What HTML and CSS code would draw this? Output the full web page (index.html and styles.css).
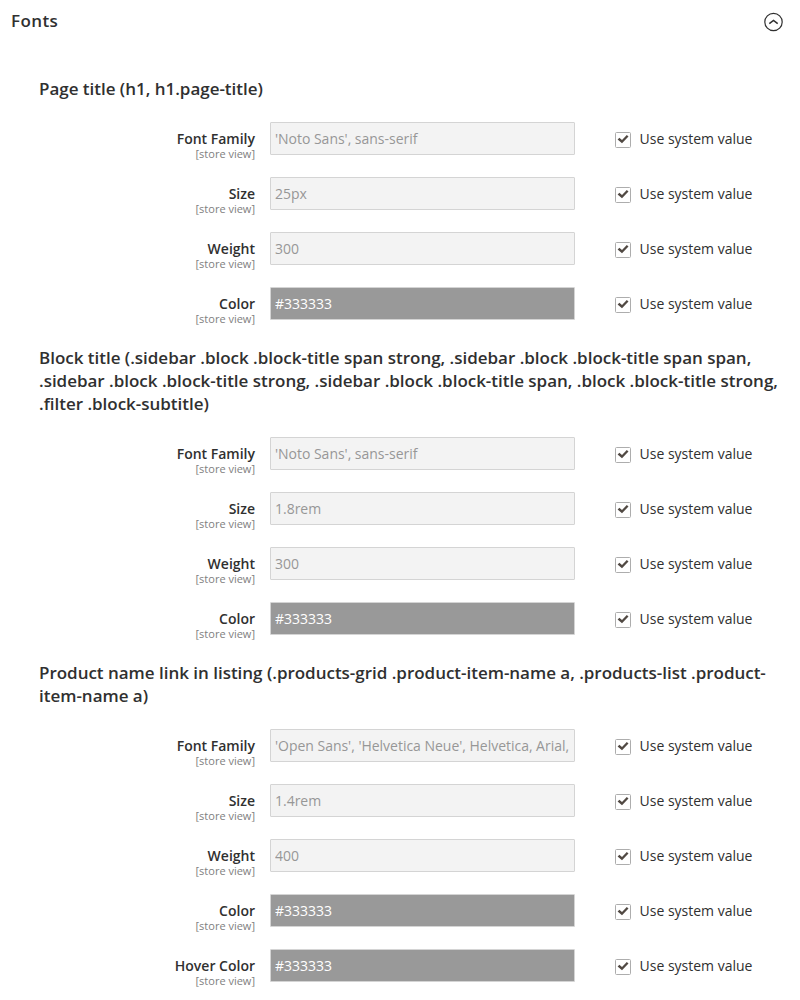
FILE: index.html
```html
<!DOCTYPE html>
<html lang="en">
<head>
<meta charset="utf-8">
<title>Fonts</title>
<link rel="stylesheet" href="styles.css">
</head>
<body>
<header class="section-head">
  <h1 class="section-title">Fonts</h1>
  <svg class="toggle" viewBox="0 0 20 20" width="20" height="20"><circle cx="10.5" cy="10" r="8.7"/><path d="M6.3 11.7 10.5 8.4 14.7 11.7" stroke-width="1.5"/></svg>
</header>
<main id="groups" class="groups"></main>
<script src="app.js"></script>
</body>
</html>
```
FILE: styles.css
```css
* { box-sizing: border-box; }
body { margin: 0; background: #fff; color: #303030; font: 14px/19px "Open Sans", sans-serif; height: 1000px; overflow: hidden; }
.section-head { display: flex; justify-content: space-between; align-items: flex-start; padding: 9px 17px 0 11px; height: 77px; }
.section-title { margin: 0; font-size: 17px; line-height: 24px; font-weight: 600; letter-spacing: .4px; }
.toggle { margin-top: 3px; fill: none; stroke: #303030; stroke-width: 1.2; }
.groups { padding: 0 20px 0 39px; }
.group { padding-bottom: 4px; }
.group-title { margin: 0 0 22px; font-size: 17px; line-height: 23px; font-weight: 600; letter-spacing: -.02px; }
.row { display: grid; grid-template-columns: 216px 305px 1fr; column-gap: 15px; height: 55px; }
.label { text-align: right; padding-top: 7px; font-weight: 600; }
.scope { display: block; font-size: 11px; line-height: 12px; font-weight: 400; color: #808080; }
.field { width: 305px; height: 33px; border: 1px solid #d4d4d4; border-radius: 1px; background: #f3f3f3; color: #979797; padding: 0 4px; font: 14px "Open Sans", sans-serif; letter-spacing: -.02px; opacity: 1; }
.field.color { background: #999; color: #fff; }
.system { display: flex; align-items: flex-start; gap: 8.5px; padding: 7px 0 0 25px; }
.check { width: 16px; height: 16px; margin-top: 3px; }
```
FILE: app.js
```js
const groups = [
  ["Page title (h1, h1.page-title)", [["Font Family", "'Noto Sans', sans-serif"], ["Size", "25px"], ["Weight", "300"], ["Color", "#333333"]]],
  ["Block title (.sidebar .block .block-title span strong, .sidebar .block .block-title span span, .sidebar .block .block-title strong, .sidebar .block .block-title span, .block .block-title strong, .filter .block-subtitle)", [["Font Family", "'Noto Sans', sans-serif"], ["Size", "1.8rem"], ["Weight", "300"], ["Color", "#333333"]]],
  ["Product name link in listing (.products-grid .product-item-name a, .products-list .product-item-name a)", [["Font Family", "'Open Sans', 'Helvetica Neue', Helvetica, Arial, sans-serif"], ["Size", "1.4rem"], ["Weight", "400"], ["Color", "#333333"], ["Hover Color", "#333333"]]]
];
const check = '<svg class="check" viewBox="0 0 16 16"><rect x=".5" y=".5" width="15" height="15" rx="1" fill="#fff" stroke="#adadad"/><path d="M2.6 7.4 4.4 5.8 7 8 11.8 2.9 13.5 4.5 7 11.3Z" fill="#514943"/></svg>';
document.getElementById("groups").innerHTML = groups.map(([title, rows]) =>
  `<section class="group"><h2 class="group-title">${title}</h2>` + rows.map(([label, value]) =>
    `<div class="row"><div class="label">${label}<span class="scope">[store view]</span></div><input class="field${label.includes("Color") ? " color" : ""}" disabled value="${value}"><label class="system">${check}<span>Use system value</span></label></div>`
  ).join("") + "</section>").join("");
```
